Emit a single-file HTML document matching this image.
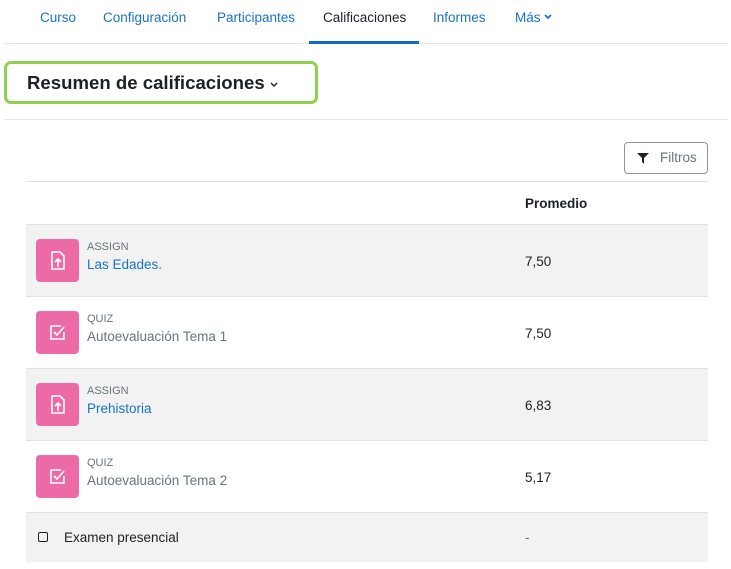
<!DOCTYPE html>
<html><head><meta charset="utf-8"><style>
body{margin:0;width:731px;height:569px;background:#fff;font-family:"Liberation Sans",sans-serif;position:relative;overflow:hidden;color:#1d2125}
.a{position:absolute}
.nav{font-size:13.5px;color:#1a73c9;top:10px}
.row{position:absolute;left:26px;width:682px;border-top:1px solid #dee2e6}
.g{background:#f2f2f2}
.ic{position:absolute;left:10px;width:43px;height:43px;background:#ec6ba7;border-radius:4px}
.ty{position:absolute;left:61px;font-size:11px;color:#6a737b}
.nm{position:absolute;left:61px;font-size:13.5px}
.val{position:absolute;left:499px;font-size:13.5px}
</style></head><body>
<div class="a nav" style="left:40px">Curso</div>
<div class="a nav" style="left:103px">Configuración</div>
<div class="a nav" style="left:217px">Participantes</div>
<div class="a nav" style="left:323px;color:#1d2125">Calificaciones</div>
<div class="a nav" style="left:433px">Informes</div>
<div class="a nav" style="left:515px">Más <svg width="8" height="6" viewBox="0 0 8 6" style="vertical-align:2px"><path d="M1 1l3 3l3-3" fill="none" stroke="#1a73c9" stroke-width="1.8"/></svg></div>
<div class="a" style="left:5px;top:43px;width:723px;height:1px;background:#e3e6e9"></div>
<div class="a" style="left:309px;top:41px;width:110px;height:3px;background:#0f6cbf"></div>
<div class="a" style="left:4px;top:61px;width:308px;height:37px;border:3px solid #8fd14f;border-radius:7px"></div>
<div class="a" style="left:27px;top:72px;font-size:18.6px;font-weight:bold">Resumen de calificaciones <svg width="8" height="6" viewBox="0 0 8 6" style="vertical-align:1px"><path d="M1 1l3 3l3-3" fill="none" stroke="#1d2125" stroke-width="1.4"/></svg></div>
<div class="a" style="left:5px;top:119px;width:723px;height:1px;background:#e3e6e9"></div>
<div class="a" style="left:624px;top:142px;width:82px;height:30px;border:1px solid #8f959e;border-radius:4px;font-size:13.5px;color:#6a737b">
<svg class="a" style="left:12px;top:10px" width="12" height="11" viewBox="0 0 12 11"><path d="M0 0H12L7 5V11L5 9V5Z" fill="#1d2125"/></svg>
<span class="a" style="left:35px;top:7px">Filtros</span></div>
<div class="row" style="top:181px;height:43px"><div class="a" style="left:499px;top:14px;font-size:13.5px;font-weight:bold">Promedio</div></div>
<div class="row g" style="top:224px;height:72px"><div class="ic" style="top:14px"><svg width="43" height="43"><path d="M16 13h8l4 4v13h-12z" fill="none" stroke="#fff" stroke-width="1.6"/><path d="M22 28v-8m-3 3l3-3l3 3" fill="none" stroke="#fff" stroke-width="1.6"/></svg></div><div class="ty" style="top:16px">ASSIGN</div><div class="nm" style="top:32px;color:#1a73c9">Las Edades.</div><div class="val" style="top:29px">7,50</div></div>
<div class="row" style="top:296px;height:72px"><div class="ic" style="top:14px"><svg width="43" height="43"><path d="M25 15h-10v13h13v-7" fill="none" stroke="#fff" stroke-width="1.6"/><path d="M18 21l3 3l7-8" fill="none" stroke="#fff" stroke-width="1.6"/></svg></div><div class="ty" style="top:16px">QUIZ</div><div class="nm" style="top:32px;color:#6a737b">Autoevaluación Tema 1</div><div class="val" style="top:29px">7,50</div></div>
<div class="row g" style="top:368px;height:72px"><div class="ic" style="top:14px"><svg width="43" height="43"><path d="M16 13h8l4 4v13h-12z" fill="none" stroke="#fff" stroke-width="1.6"/><path d="M22 28v-8m-3 3l3-3l3 3" fill="none" stroke="#fff" stroke-width="1.6"/></svg></div><div class="ty" style="top:16px">ASSIGN</div><div class="nm" style="top:32px;color:#1a73c9">Prehistoria</div><div class="val" style="top:29px">6,83</div></div>
<div class="row" style="top:440px;height:72px"><div class="ic" style="top:14px"><svg width="43" height="43"><path d="M25 15h-10v13h13v-7" fill="none" stroke="#fff" stroke-width="1.6"/><path d="M18 21l3 3l7-8" fill="none" stroke="#fff" stroke-width="1.6"/></svg></div><div class="ty" style="top:16px">QUIZ</div><div class="nm" style="top:32px;color:#6a737b">Autoevaluación Tema 2</div><div class="val" style="top:29px">5,17</div></div>
<div class="row g" style="top:512px;height:49px"><div class="a" style="left:12px;top:19px;width:8px;height:8px;border:1.5px solid #1d2125;border-radius:2px"></div><div class="a" style="left:38px;top:17px;font-size:13.5px">Examen presencial</div><div class="val" style="top:17px;color:#6a737b">-</div></div>
</body></html>
